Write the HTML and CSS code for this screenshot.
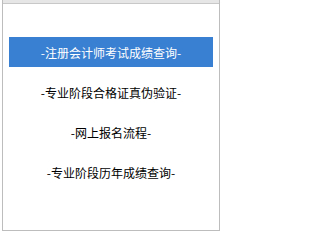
FILE: index.html
```html
<!DOCTYPE html>
<html lang="zh-CN">
<head>
<meta charset="utf-8">
<link rel="stylesheet" href="styles.css">
</head>
<body>
<div class="panel">
  <div class="panel-head"></div>
  <ul class="menu">
    <li class="item active">-注册会计师考试成绩查询-</li>
    <li class="item">-专业阶段合格证真伪验证-</li>
    <li class="item">-网上报名流程-</li>
    <li class="item">-专业阶段历年成绩查询-</li>
  </ul>
</div>
</body>
</html>
```
FILE: styles.css
```css
html, body {
  margin: 0;
  padding: 0;
  background: #ffffff;
}
.panel {
  margin-left: 2px;
  width: 216px;
  height: 230px;
  border: 1px solid #bdbdbd;
  border-top: none;
  display: flex;
  flex-direction: column;
}
.panel-head {
  height: 3px;
  background: #e6e6e6;
  border-bottom: 1px solid #c8c8c8;
}
.menu {
  list-style: none;
  margin: 0;
  padding: 33px 6px 0;
  display: flex;
  flex-direction: column;
  gap: 10px;
}
.item {
  height: 30px;
  display: flex;
  align-items: center;
  justify-content: center;
  font-family: "Noto Sans CJK SC", "Noto Sans", sans-serif;
  font-size: 12px;
  color: #000000;
  white-space: nowrap;
}
.item.active {
  background: #3a80d2;
  color: #ffffff;
}
```
